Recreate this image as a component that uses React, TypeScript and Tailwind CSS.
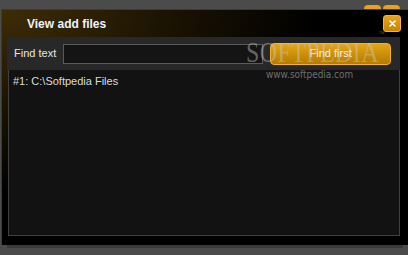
import React from "react";

// "View add files" dialog sitting over a dark host window.
export default function App() {
  return (
    <div className="relative w-[408px] h-[255px] overflow-hidden bg-[#4b4b4b] font-['Liberation_Sans',Arial,sans-serif]">
      {/* host window buttons peeking behind the dialog */}
      <div className="h-[9px] flex justify-end gap-[2px] pr-[8px] pt-[5px] overflow-hidden">
        <div className="w-[17px] h-[10px] rounded-t-[4px] bg-[#e9a212]" />
        <div className="w-[17px] h-[10px] rounded-t-[4px] bg-[#e9a212]" />
      </div>

      <div className="ml-[1px] h-[236px] flex flex-col border-t border-l border-[#4d3a12] bg-[radial-gradient(ellipse_at_top_left,#3e2c07_0%,#1c1403_28%,#000_55%)]">
        <div className="h-[27px] flex items-center pl-[25px] pr-[7px]">
          <span className="flex-1 text-[12px] font-bold text-[#eef2ff]">View add files</span>
          <button className="w-[18px] h-[17px] flex items-center justify-center rounded-[3px] border border-[#f3b53a] bg-gradient-to-b from-[#eaa21a] to-[#c98500]">
            <svg width="7" height="7" viewBox="0 0 7 7">
              <path d="M1 1L6 6M6 1L1 6" stroke="#fff" strokeWidth="1.6" strokeLinecap="round" />
            </svg>
          </button>
        </div>

        <div className="ml-[5px] mr-[8px] h-[33px] flex items-center pl-[7px] bg-[#282828]">
          <span className="text-[11px] text-[#e6e6e6]">Find text</span>
          <input
            className="ml-[7px] w-[200px] h-[20px] bg-[#141414] border border-[#5a5a5a] outline-none text-[11px] text-white px-1"
            defaultValue=""
          />
          <button className="ml-[7px] w-[121px] h-[22px] rounded-[4px] border border-[#f2b22c] bg-gradient-to-b from-[#e5a515] to-[#b57b00] text-[11px] text-[#fbf5e6]">
            Find first
          </button>
        </div>

        <div className="ml-[6px] mr-[8px] h-[166px] border border-t-0 border-[#3f3f3f] bg-[#121212] pl-[4px] pt-[5px]">
          <p className="text-[11px] leading-[13px] text-[#dcdcdc]">#1: C:\Softpedia Files</p>
        </div>
      </div>

      <div className="ml-[7px] mr-[5px] h-[3px] bg-[#3a3a3a]" />

      {/* watermark overlay */}
      <div className="absolute left-[246px] top-[37px] pointer-events-none origin-left scale-x-[0.8] font-['Liberation_Serif',serif] text-[30px] leading-[30px] text-[#c8c8c8]/45 tracking-[0.5px]">
        SOFTPEDIA<sup className="text-[7px] align-top">™</sup>
      </div>
      <div className="absolute left-[266px] top-[68px] pointer-events-none text-[10.5px] leading-[12px] text-[#6f6f6f] font-['DejaVu_Sans',sans-serif] scale-x-[0.85] origin-left">
        www.softpedia.com
      </div>
    </div>
  );
}
